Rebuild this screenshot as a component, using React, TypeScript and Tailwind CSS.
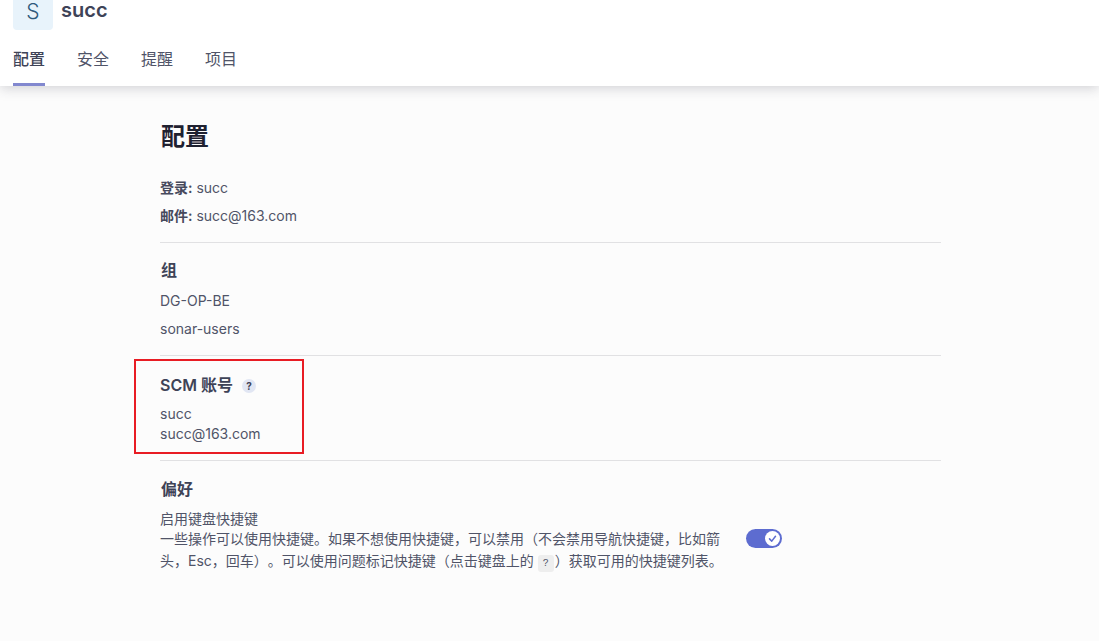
import React from "react";

const cjk = "font-['Inter','Noto_Sans_CJK_SC',sans-serif]";

const App = () => {
  return (
    <div className={`h-[641px] w-[1099px] overflow-hidden bg-[#fcfcfc] text-[14px] text-[#505468] [text-spacing-trim:space-all] ${cjk}`}>
      <header className="relative z-10 h-[86px] bg-white shadow-[0_2px_12px_rgba(50,50,70,0.22)]">
        <div className="flex h-[30px] items-start gap-2 pl-[13px]">
          <div className="flex h-[30px] w-10 items-center justify-center rounded-b-[4px] bg-[#e8f3fb] pb-[7px] text-[21px] font-light leading-none text-[#2f5a7c]">
            S
          </div>
          <span className="text-[20px] font-semibold leading-[21px] text-[#3e4357]">succ</span>
        </div>
        <nav className="mt-[17px] flex gap-8 pl-[13px] text-[16px] leading-[24px]">
          <div className="flex h-[39px] flex-col justify-between font-medium text-[#3e4357]">
            <span>配置</span>
            <span className="h-[3px] bg-[#8288cf]" />
          </div>
          <span>安全</span>
          <span>提醒</span>
          <span>项目</span>
        </nav>
      </header>

      <main className="relative ml-[160px] w-[781px]">
        <h1 className="pl-px pt-[36px] text-[24px] font-semibold leading-[30px] text-[#1f2130]">配置</h1>
        <p className="mt-[26px] leading-[20px]">
          <b className="font-semibold text-[#46495c]">登录:</b> succ
        </p>
        <p className="mt-2 leading-[20px]">
          <b className="font-semibold text-[#46495c]">邮件:</b> succ@163.com
        </p>
        <hr className="mt-4 border-[#e1e1e3]" />

        <h2 className="mt-[15px] pl-px text-[16px] font-semibold leading-[24px] text-[#3e4357]">组</h2>
        <p className="mt-[9px] leading-[20px]">DG-OP-BE</p>
        <p className="mt-2 leading-[20px]">sonar-users</p>
        <hr className="mt-4 border-[#e1e1e3]" />

        <h2 className="mt-[17px] flex items-center text-[16px] font-semibold leading-[24px] text-[#3e4357]">
          SCM 账号
          <span className="ml-[9px] mt-[2px] flex h-[14px] w-[14px] items-center justify-center rounded-full bg-[#e1e6f3] text-[10px] font-bold leading-none text-[#3e4357]">
            ?
          </span>
        </h2>
        <p className="mt-[7px] leading-[20px]">succ</p>
        <p className="leading-[20px]">succ@163.com</p>
        <hr className="mt-4 border-[#e1e1e3]" />

        <h2 className="mt-4 pl-px text-[16px] font-semibold leading-[24px] text-[#3e4357]">偏好</h2>
        <p className="mt-2 leading-[19px]">启用键盘快捷键</p>
        <div className="flex items-start">
          <p className="w-[570px] leading-[22px]">
            一些操作可以使用快捷键。如果不想使用快捷键，可以禁用（不会禁用导航快捷键，比如箭头，Esc，回车）。可以使用问题标记快捷键（点击键盘上的
            <code className="ml-[4px] mr-px rounded-[3px] bg-[#eeeeee] px-[5px] py-[3px] text-[10px]">?</code>
            ）获取可用的快捷键列表。
          </p>
          <div className="ml-[16px] mt-px flex h-[19px] w-9 items-center justify-end rounded-full bg-[#5d6cd0] pr-[2px]">
            <span className="flex h-[15px] w-[15px] items-center justify-center rounded-full bg-white">
              <svg width="9" height="9" viewBox="0 0 12 12" fill="none" stroke="#5d6cd0" strokeWidth="2" strokeLinecap="round" strokeLinejoin="round">
                <path d="M2 6.5 5 9.5 10 3" />
              </svg>
            </span>
          </div>
        </div>
        <div className="absolute left-[-26px] top-[273px] h-[95px] w-[170px] border-2 border-[#e81c24]" />
      </main>
    </div>
  );
};

export default App;
